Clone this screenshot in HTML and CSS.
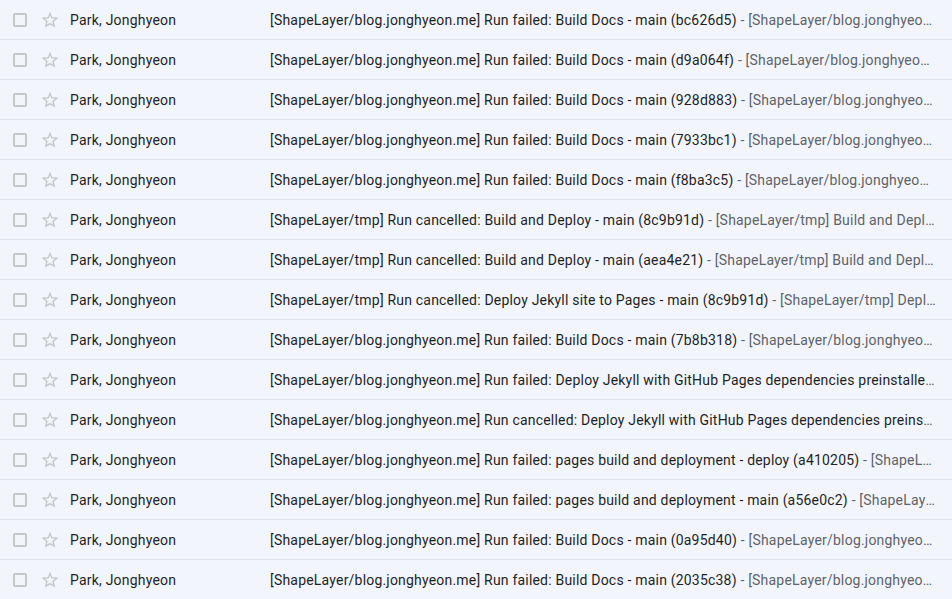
FILE: index.html
```html
<!DOCTYPE html>
<html>
<head>
<meta charset="utf-8">
<link rel="stylesheet" href="styles.css">
</head>
<body>
<div class="list" id="list"></div>
<svg width="0" height="0" class="defs">
  <symbol id="star" viewBox="0 0 24 24"><path d="M22 9.24l-7.19-.62L12 2 9.190 8.63 2 9.24l5.46 4.73L5.82 21 12 17.270 18.18 21l-1.63-7.03L22 9.24zM12 15.4l-3.76 2.27 1-4.28-3.32-2.88 4.38-.38L12 6.1l1.71 4.04 4.38.38-3.32 2.88 1 4.28L12 15.4z"/></symbol>
</svg>
<script>
const rows = [
 ["[ShapeLayer/blog.jonghyeon.me] Run failed: Build Docs - main (bc626d5)", "[ShapeLayer/blog.jonghyeon.me] Build Docs workflow run"],
 ["[ShapeLayer/blog.jonghyeon.me] Run failed: Build Docs - main (d9a064f)", "[ShapeLayer/blog.jonghyeon.me] Build Docs workflow run"],
 ["[ShapeLayer/blog.jonghyeon.me] Run failed: Build Docs - main (928d883)", "[ShapeLayer/blog.jonghyeon.me] Build Docs workflow run"],
 ["[ShapeLayer/blog.jonghyeon.me] Run failed: Build Docs - main (7933bc1)", "[ShapeLayer/blog.jonghyeon.me] Build Docs workflow run"],
 ["[ShapeLayer/blog.jonghyeon.me] Run failed: Build Docs - main (f8ba3c5)", "[ShapeLayer/blog.jonghyeon.me] Build Docs workflow run"],
 ["[ShapeLayer/tmp] Run cancelled: Build and Deploy - main (8c9b91d)", "[ShapeLayer/tmp] Build and Deploy workflow run"],
 ["[ShapeLayer/tmp] Run cancelled: Build and Deploy - main (aea4e21)", "[ShapeLayer/tmp] Build and Deploy workflow run"],
 ["[ShapeLayer/tmp] Run cancelled: Deploy Jekyll site to Pages - main (8c9b91d)", "[ShapeLayer/tmp] Deploy Jekyll site to Pages workflow run"],
 ["[ShapeLayer/blog.jonghyeon.me] Run failed: Build Docs - main (7b8b318)", "[ShapeLayer/blog.jonghyeon.me] Build Docs workflow run"],
 ["[ShapeLayer/blog.jonghyeon.me] Run failed: Deploy Jekyll with GitHub Pages dependencies preinstalled - main", "[ShapeLayer/blog.jonghyeon.me] Deploy Jekyll"],
 ["[ShapeLayer/blog.jonghyeon.me] Run cancelled: Deploy Jekyll with GitHub Pages dependencies preinstalled - main", "[ShapeLayer/blog.jonghyeon.me] Deploy Jekyll"],
 ["[ShapeLayer/blog.jonghyeon.me] Run failed: pages build and deployment - deploy (a410205)", "[ShapeLayer/blog.jonghyeon.me] pages build and deployment"],
 ["[ShapeLayer/blog.jonghyeon.me] Run failed: pages build and deployment - main (a56e0c2)", "[ShapeLayer/blog.jonghyeon.me] pages build and deployment"],
 ["[ShapeLayer/blog.jonghyeon.me] Run failed: Build Docs - main (0a95d40)", "[ShapeLayer/blog.jonghyeon.me] Build Docs workflow run"],
 ["[ShapeLayer/blog.jonghyeon.me] Run failed: Build Docs - main (2035c38)", "[ShapeLayer/blog.jonghyeon.me] Build Docs workflow run"]
];
const list = document.getElementById('list');
for (const [subj, snip] of rows) {
  const r = document.createElement('div');
  r.className = 'row';
  r.innerHTML = '<span class="check"></span>' +
    '<svg class="star"><use href="#star"/></svg>' +
    '<span class="name">Park, Jonghyeon</span>' +
    '<span class="text"><span class="subj"></span><span class="snip"></span></span>';
  r.querySelector('.subj').textContent = subj;
  r.querySelector('.snip').textContent = ' - ' + snip;
  list.appendChild(r);
}
</script>
</body>
</html>
```
FILE: styles.css
```css
html, body {
  margin: 0;
  padding: 0;
  background: #f2f6fc;
}
body {
  font-family: Roboto, "Noto Sans", Arial, sans-serif;
  font-size: 14px;
  letter-spacing: 0.2px;
  color: #1f1f1f;
  overflow: hidden;
}
.defs { position: absolute; }
.list { width: 952px; }
.row {
  display: flex;
  align-items: center;
  height: 39px;
  border-bottom: 1px solid #dfe3ea;
}
.check {
  box-sizing: border-box;
  width: 14px;
  height: 14px;
  margin-left: 13px;
  border: 2px solid #c4c7c5;
  border-radius: 2px;
  flex: none;
}
.star {
  width: 20px;
  height: 20px;
  margin-left: 13px;
  fill: #c4c7c5;
  flex: none;
}
.name {
  margin-left: 10px;
  width: 200px;
  flex: none;
  white-space: nowrap;
  overflow: hidden;
}
.text {
  flex: 1;
  min-width: 0;
  margin-right: 16px;
  white-space: nowrap;
  overflow: hidden;
  text-overflow: ellipsis;
  color: #5f6368;
}
.subj { color: #1f1f1f; }
```
